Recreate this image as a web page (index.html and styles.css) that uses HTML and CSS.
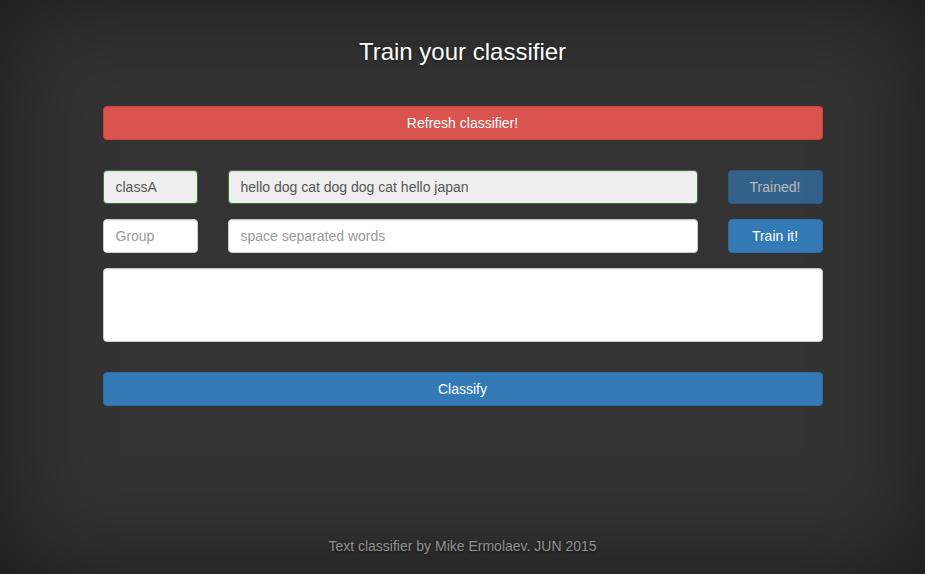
FILE: index.html
```html
<!DOCTYPE html>
<html>
<head>
<meta charset="utf-8">
<link rel="stylesheet" href="styles.css">
</head>
<body>
<div class="page">
  <main class="container">
    <h1 class="title">Train your classifier</h1>
    <button class="btn btn-danger btn-block">Refresh classifier!</button>
    <div class="rows">
      <div class="row">
        <input class="field field-success" type="text" value="classA" readonly>
        <input class="field field-success" type="text" value="hello dog cat dog dog cat hello japan" readonly>
        <button class="btn btn-primary btn-disabled">Trained!</button>
      </div>
      <div class="row">
        <input class="field" type="text" placeholder="Group">
        <input class="field" type="text" placeholder="space separated words">
        <button class="btn btn-primary">Train it!</button>
      </div>
    </div>
    <textarea class="field area"></textarea>
    <button class="btn btn-primary btn-block classify">Classify</button>
  </main>
  <footer class="footer">Text classifier by Mike Ermolaev. JUN 2015</footer>
</div>
</body>
</html>
```
FILE: styles.css
```css
html, body {
  margin: 0;
  height: 100%;
}
body {
  background: #333;
  color: #fff;
  font-family: "Liberation Sans", Arial, sans-serif;
  font-size: 14px;
  box-shadow: inset 0 0 100px rgba(0,0,0,.5);
  overflow: hidden;
}
.page {
  height: 574px;
  display: flex;
  flex-direction: column;
  align-items: center;
}
.container {
  width: 720px;
  padding-top: 38px;
  flex: 1;
}
.title {
  margin: 0 0 40px;
  text-align: center;
  font-size: 24px;
  font-weight: 500;
  line-height: 28px;
  text-shadow: 0 1px 3px rgba(0,0,0,.5);
}
.btn {
  display: block;
  font-family: inherit;
  font-size: 14px;
  line-height: 20px;
  padding: 6px 12px;
  border: 1px solid transparent;
  border-radius: 4px;
  color: #fff;
  text-align: center;
  height: 34px;
  cursor: pointer;
}
.btn-block {
  width: 100%;
}
.btn-danger {
  background: #d9534f;
  border-color: #d43f3a;
}
.btn-primary {
  background: #337ab7;
  border-color: #2e6da4;
}
.btn-disabled {
  opacity: .65;
}
.rows {
  margin-top: 30px;
  display: flex;
  flex-direction: column;
  gap: 15px;
}
.row {
  display: grid;
  grid-template-columns: 95px 1fr 95px;
  column-gap: 30px;
}
.field {
  box-sizing: border-box;
  height: 34px;
  width: 100%;
  padding: 6px 12px;
  font-family: inherit;
  font-size: 14px;
  line-height: 20px;
  color: #555;
  background: #fff;
  border: 1px solid #ccc;
  border-radius: 4px;
  box-shadow: inset 0 1px 1px rgba(0,0,0,.075);
  outline: none;
}
.field::placeholder {
  color: #999;
}
.field-success {
  background: #eee;
  border-color: #3c763d;
}
.area {
  display: block;
  margin-top: 15px;
  height: 74px;
  resize: none;
}
.classify {
  margin-top: 30px;
}
.footer {
  color: rgba(255,255,255,.5);
  font-size: 14px;
  line-height: 20px;
  padding-bottom: 18px;
  text-shadow: 0 1px 3px rgba(0,0,0,.5);
}
```
